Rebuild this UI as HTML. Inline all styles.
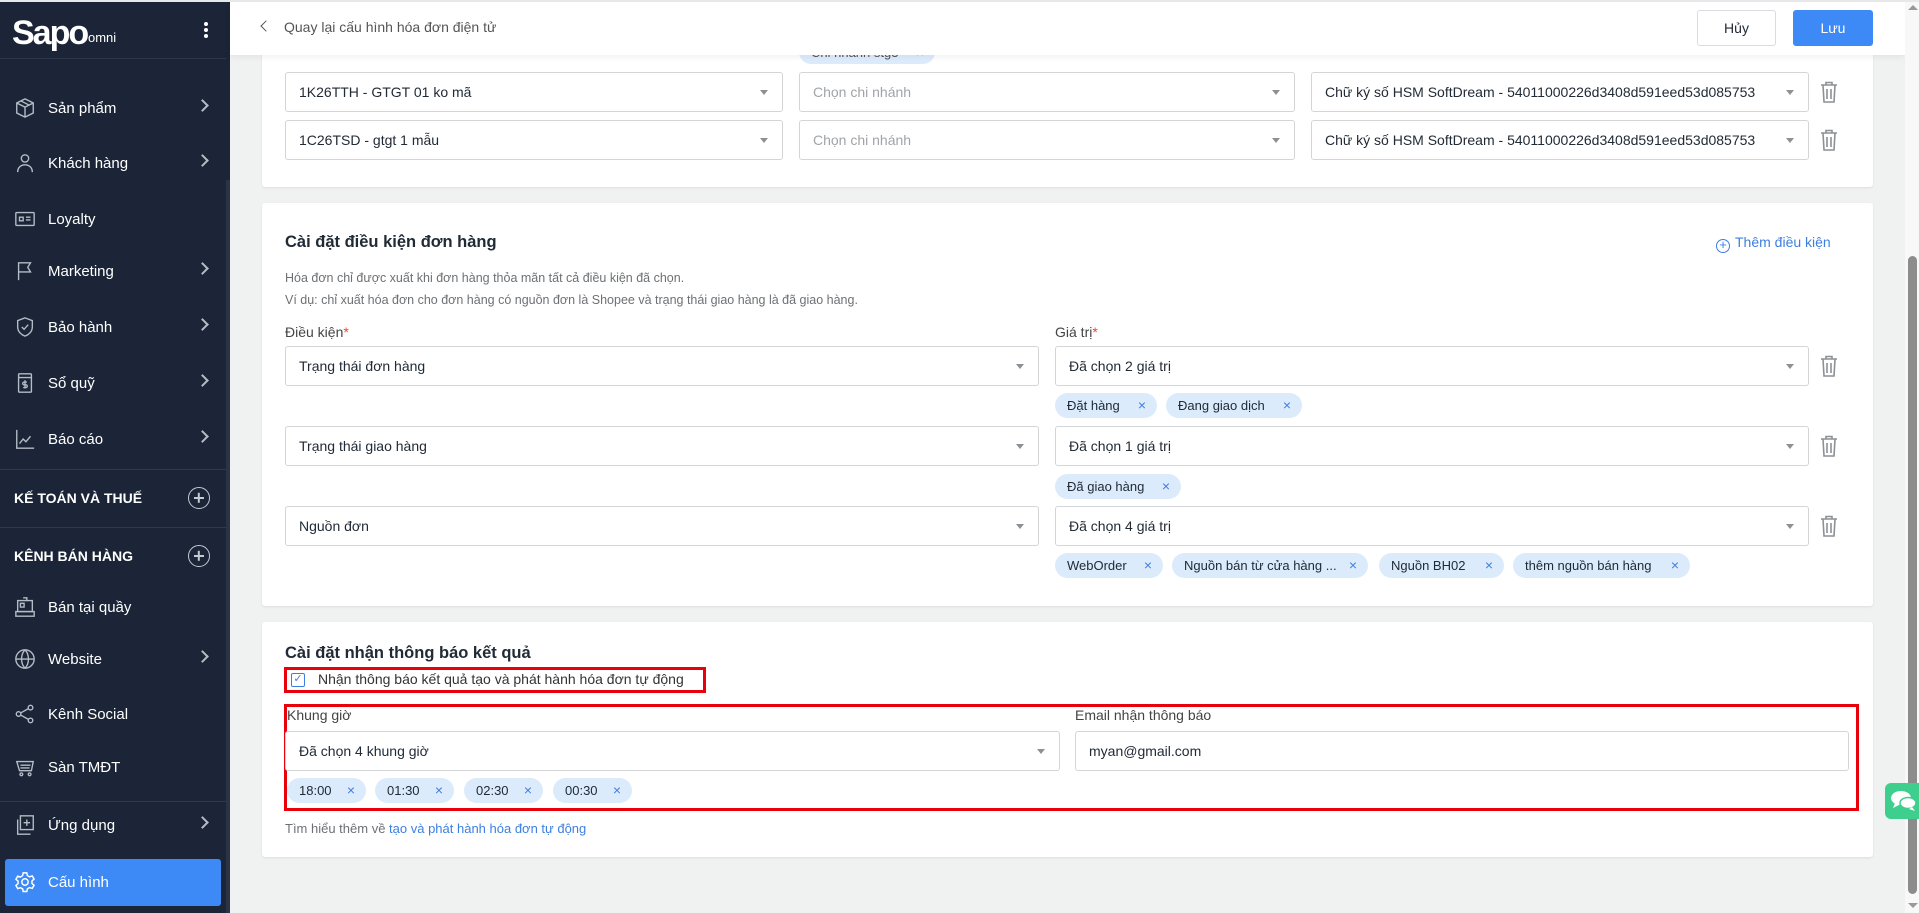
<!DOCTYPE html>
<html><head><meta charset="utf-8"><style>
*{box-sizing:border-box;margin:0;padding:0}
body{width:1919px;height:913px;overflow:hidden;background:#f0f1f1;font-family:"Liberation Sans",sans-serif;position:relative;color:#212b36}
.a{position:absolute}
#sb{left:0;top:0;width:230px;height:913px;background:#1b2537}
.nav{position:absolute;left:0;width:230px;height:40px;color:#fff;font-size:15px;display:flex;align-items:center}
.nav .ic{position:absolute;left:14px;width:22px;height:22px}
.nav span{position:absolute;left:48px}
.nav .ch{position:absolute;left:198px;top:13px;width:9px;height:9px;border-right:2px solid #b6bcc6;border-top:2px solid #b6bcc6;transform:rotate(45deg)}
.dv{position:absolute;left:0;width:226px;height:1px;background:#2f3a4c}
.sec{position:absolute;left:14px;color:#fff;font-weight:bold;font-size:14px}
.plus{position:absolute;left:188px;width:22px;height:22px;border:1.6px solid #c5cad2;border-radius:50%}
.plus:before,.plus:after{content:"";position:absolute;background:#c5cad2;left:4.5px;top:9px;width:10px;height:1.6px}
.plus:after{transform:rotate(90deg)}
.card{position:absolute;left:262px;width:1611px;background:#fff;border-radius:3px;box-shadow:0 1px 2px rgba(0,0,0,.08)}
.sel{position:absolute;height:40px;border:1px solid #d3d5d7;border-radius:3px;background:#fff;font-size:14px;line-height:38px;padding-left:13px;color:#212b36}
.sel.ar:after{content:"";position:absolute;right:14px;top:17px;border-left:4px solid transparent;border-right:4px solid transparent;border-top:5px solid #8c9196}
.ph{color:#a0a4a8}
.tr{position:absolute;width:18px;height:22px}
.chip{position:absolute;height:25px;background:#dcebfc;border-radius:13px;font-size:13px;line-height:25px;padding:0 28px 0 12px;color:#212b36;white-space:nowrap;overflow:hidden}
.chip:after{content:"×";position:absolute;right:11px;top:0;color:#3f7ee0;font-size:14px}
.t{position:absolute;white-space:nowrap}
</style></head><body>
<div class="a" style="left:0;top:0;width:1919px;height:2px;background:#e6e8ea;z-index:5"></div>
<div id="sb" class="a">
<div class="a" style="left:12px;top:14px;color:#fff;font-size:34px;font-weight:bold;letter-spacing:-2px;font-family:'Liberation Sans',sans-serif">Sapo</div>
<div class="a" style="left:88px;top:30px;color:#fff;font-size:13px">omni</div>
<div class="a" style="left:204px;top:22px;width:4px;height:4px;background:#fff;border-radius:2px;box-shadow:0 6px 0 #fff,0 12px 0 #fff"></div>
<div class="dv" style="top:58px;background:#2c3748"></div>
<div class="a" style="left:226px;top:180px;width:4px;height:733px;background:#2a3446"></div>
<div class="nav" style="top:88px"><svg class="ic" viewBox="0 0 24 24" fill="none" stroke="#b6bcc6" stroke-width="1.5"><path d="M12 2l9 4.5v11L12 22l-9-4.5v-11z M3 6.5l9 4.5 9-4.5 M12 11v11 M7.5 4.3l9 4.5"/></svg><span>Sản phẩm</span><i class="ch"></i></div>
<div class="nav" style="top:143px"><svg class="ic" viewBox="0 0 24 24" fill="none" stroke="#b6bcc6" stroke-width="1.5"><circle cx="12" cy="7" r="4"/><path d="M4 22c0-5 3.5-8 8-8s8 3 8 8"/></svg><span>Khách hàng</span><i class="ch"></i></div>
<div class="nav" style="top:199px"><svg class="ic" viewBox="0 0 24 24" fill="none" stroke="#b6bcc6" stroke-width="1.5"><rect x="2" y="5" width="20" height="14" rx="1"/><path d="M6 10h4v4H6z M13 10h5 M13 13h5"/></svg><span>Loyalty</span></div>
<div class="nav" style="top:251px"><svg class="ic" viewBox="0 0 24 24" fill="none" stroke="#b6bcc6" stroke-width="1.5"><path d="M5 22V3h13l-3 5 3 5H5"/></svg><span>Marketing</span><i class="ch"></i></div>
<div class="nav" style="top:307px"><svg class="ic" viewBox="0 0 24 24" fill="none" stroke="#b6bcc6" stroke-width="1.5"><path d="M12 2l8 3v7c0 5-4 8.5-8 10-4-1.5-8-5-8-10V5z M8.5 12l2.5 2.5 4.5-5"/></svg><span>Bảo hành</span><i class="ch"></i></div>
<div class="nav" style="top:363px"><svg class="ic" viewBox="0 0 24 24" fill="none" stroke="#b6bcc6" stroke-width="1.5"><rect x="5" y="2" width="14" height="20" rx="1"/><path d="M5 6h14 M12 9v9 M14 11h-3a1.5 1.5 0 000 3h2a1.5 1.5 0 010 3h-3"/></svg><span>Sổ quỹ</span><i class="ch"></i></div>
<div class="nav" style="top:419px"><svg class="ic" viewBox="0 0 24 24" fill="none" stroke="#b6bcc6" stroke-width="1.5"><path d="M3 2v20h19 M6 17l4-5 3 3 5-6"/></svg><span>Báo cáo</span><i class="ch"></i></div>
<div class="dv" style="top:469px"></div>
<div class="sec" style="top:490px">KẾ TOÁN VÀ THUẾ</div><div class="plus" style="top:487px"></div>
<div class="dv" style="top:527px"></div>
<div class="sec" style="top:548px">KÊNH BÁN HÀNG</div><div class="plus" style="top:545px"></div>
<div class="nav" style="top:587px"><svg class="ic" viewBox="0 0 24 24" fill="none" stroke="#b6bcc6" stroke-width="1.5"><rect x="4" y="5" width="16" height="12"/><path d="M2 17h20v5H2z M7 8h4v4H7z M10 2h4v3"/></svg><span>Bán tại quầy</span></div>
<div class="nav" style="top:639px"><svg class="ic" viewBox="0 0 24 24" fill="none" stroke="#b6bcc6" stroke-width="1.5"><circle cx="12" cy="12" r="10"/><path d="M2 12h20 M12 2c-5 5-5 15 0 20 M12 2c5 5 5 15 0 20"/></svg><span>Website</span><i class="ch"></i></div>
<div class="nav" style="top:694px"><svg class="ic" viewBox="0 0 24 24" fill="none" stroke="#b6bcc6" stroke-width="1.5"><circle cx="18" cy="5" r="2.5"/><circle cx="5" cy="12" r="2.5"/><circle cx="18" cy="19" r="2.5"/><path d="M7 11l9-5 M7 13l9 5"/></svg><span>Kênh Social</span></div>
<div class="nav" style="top:747px"><svg class="ic" viewBox="0 0 24 24" fill="none" stroke="#b6bcc6" stroke-width="1.5"><path d="M3 6h18l-2 10H6z M7 10h11 M7 13h10"/><circle cx="8" cy="20" r="1.5"/><circle cx="17" cy="20" r="1.5"/></svg><span>Sàn TMĐT</span></div>
<div class="dv" style="top:801px"></div>
<div class="nav" style="top:805px"><svg class="ic" viewBox="0 0 24 24" fill="none" stroke="#b6bcc6" stroke-width="1.5"><rect x="7" y="2" width="14" height="15"/><path d="M4 6v16h14 M14 6v7 M10.5 9.5h7"/></svg><span>Ứng dụng</span><i class="ch"></i></div>
<div class="a" style="left:5px;top:859px;width:216px;height:47px;background:#3d8af7;border-radius:3px"></div>
<div class="nav" style="top:862px"><svg class="ic" viewBox="0 0 24 24" fill="none" stroke="#fff" stroke-width="1.6"><circle cx="12" cy="12" r="3.5"/><path d="M10 2h4l.6 3 2.4 1.4 2.9-1 2 3.4-2.3 2v2.8l2.3 2-2 3.4-2.9-1-2.4 1.4-.6 3h-4l-.6-3L7 18.2l-2.9 1-2-3.4 2.3-2v-2.8l-2.3-2 2-3.4 2.9 1L9.4 5z"/></svg><span>Cấu hình</span></div>
</div>

<div class="card" style="top:40px;height:147px"></div>
<div class="chip" style="left:799px;top:40px;height:24px;color:#555;width:136px">Chi nhánh stg3</div>
<div class="sel ar" style="left:285px;top:72px;width:498px">1K26TTH - GTGT 01 ko mã</div>
<div class="sel ar" style="left:799px;top:72px;width:496px"><span class="ph">Chọn chi nhánh</span></div>
<div class="sel ar" style="left:1311px;top:72px;width:498px">Chữ ký số HSM SoftDream - 54011000226d3408d591eed53d085753</div>
<div class="sel ar" style="left:285px;top:120px;width:498px">1C26TSD - gtgt 1 mẫu</div>
<div class="sel ar" style="left:799px;top:120px;width:496px"><span class="ph">Chọn chi nhánh</span></div>
<div class="sel ar" style="left:1311px;top:120px;width:498px">Chữ ký số HSM SoftDream - 54011000226d3408d591eed53d085753</div>

<div class="a" style="left:230px;top:2px;width:1675px;height:53px;background:#fff;box-shadow:0 2px 6px rgba(0,0,0,.06)"></div>
<div class="a" style="left:262px;top:22px;width:8px;height:8px;border-left:1.6px solid #555;border-bottom:1.6px solid #555;transform:rotate(45deg)"></div>
<div class="t" style="left:284px;top:19px;font-size:14px;color:#555">Quay lại cấu hình hóa đơn điện tử</div>
<div class="a" style="left:1697px;top:10px;width:79px;height:36px;border:1px solid #d9dbde;border-radius:3px;text-align:center;line-height:34px;font-size:14px;background:#fff">Hủy</div>
<div class="a" style="left:1793px;top:10px;width:80px;height:36px;background:#3d8af7;border-radius:3px;text-align:center;line-height:36px;font-size:14px;color:#fff">Lưu</div>

<div class="card" style="top:203px;height:403px"></div>
<div class="t" style="left:285px;top:233px;font-size:16.5px;font-weight:bold;color:#212b36">Cài đặt điều kiện đơn hàng</div>
<div class="t" style="left:1716px;top:234px;font-size:14px;color:#3d7fe0"><span style="display:inline-block;width:14px;height:14px;border:1.5px solid #3d7fe0;border-radius:50%;text-align:center;line-height:10px;font-size:13px;vertical-align:-2px;margin-right:5px">+</span>Thêm điều kiện</div>
<div class="t" style="left:285px;top:271px;font-size:12.5px;color:#6d7175">Hóa đơn chỉ được xuất khi đơn hàng thỏa mãn tất cả điều kiện đã chọn.</div>
<div class="t" style="left:285px;top:293px;font-size:12.5px;color:#6d7175">Ví dụ: chỉ xuất hóa đơn cho đơn hàng có nguồn đơn là Shopee và trạng thái giao hàng là đã giao hàng.</div>
<div class="t" style="left:285px;top:324px;font-size:14px;color:#444">Điều kiện<span style="color:#e43">*</span></div>
<div class="t" style="left:1055px;top:324px;font-size:14px;color:#444">Giá trị<span style="color:#e43">*</span></div>
<div class="sel ar" style="left:285px;top:346px;width:754px">Trạng thái đơn hàng</div>
<div class="sel ar" style="left:1055px;top:346px;width:754px">Đã chọn 2 giá trị</div>
<div class="chip" style="left:1055px;top:393px;width:102px">Đặt hàng</div>
<div class="chip" style="left:1166px;top:393px;width:136px">Đang giao dịch</div>
<div class="sel ar" style="left:285px;top:426px;width:754px">Trạng thái giao hàng</div>
<div class="sel ar" style="left:1055px;top:426px;width:754px">Đã chọn 1 giá trị</div>
<div class="chip" style="left:1055px;top:474px;width:126px">Đã giao hàng</div>
<div class="sel ar" style="left:285px;top:506px;width:754px">Nguồn đơn</div>
<div class="sel ar" style="left:1055px;top:506px;width:754px">Đã chọn 4 giá trị</div>
<div class="chip" style="left:1055px;top:553px;width:108px">WebOrder</div>
<div class="chip" style="left:1172px;top:553px;width:196px">Nguồn bán từ cửa hàng ...</div>
<div class="chip" style="left:1379px;top:553px;width:125px">Nguồn BH02</div>
<div class="chip" style="left:1513px;top:553px;width:177px">thêm nguồn bán hàng</div>

<div class="card" style="top:622px;height:235px"></div>
<div class="t" style="left:285px;top:644px;font-size:16.5px;font-weight:bold;color:#212b36">Cài đặt nhận thông báo kết quả</div>
<div class="a" style="left:284px;top:667px;width:422px;height:26px;border:3px solid #e8000b"></div>
<div class="a" style="left:291px;top:673px;width:14px;height:14px;border:1.5px solid #3d7fe0;border-radius:2px;color:#3d7fe0;font-size:11px;line-height:11px;text-align:center">✓</div>
<div class="t" style="left:318px;top:671px;font-size:14px;color:#333">Nhận thông báo kết quả tạo và phát hành hóa đơn tự động</div>
<div class="a" style="left:284px;top:704px;width:1575px;height:107px;border:3px solid #e8000b"></div>
<div class="t" style="left:287px;top:707px;font-size:14px;color:#444">Khung giờ</div>
<div class="t" style="left:1075px;top:707px;font-size:14px;color:#444">Email nhận thông báo</div>
<div class="sel ar" style="left:285px;top:731px;width:775px">Đã chọn 4 khung giờ</div>
<div class="sel" style="left:1075px;top:731px;width:774px">myan@gmail.com</div>
<div class="chip" style="left:287px;top:778px;width:79px">18:00</div>
<div class="chip" style="left:375px;top:778px;width:79px">01:30</div>
<div class="chip" style="left:464px;top:778px;width:79px">02:30</div>
<div class="chip" style="left:553px;top:778px;width:79px">00:30</div>
<div class="t" style="left:285px;top:821px;font-size:13px;color:#6d7175">Tìm hiểu thêm về <span style="color:#3d7fe0">tạo và phát hành hóa đơn tự động</span></div>

<svg class="tr" style="left:1820px;top:81px" viewBox="0 0 18 22" fill="none" stroke="#8c9196" stroke-width="1.6"><path d="M1 4h16 M6 4V1.5h6V4 M3 4l1 17h10l1-17 M7 8v10 M11 8v10"/></svg>
<svg class="tr" style="left:1820px;top:129px" viewBox="0 0 18 22" fill="none" stroke="#8c9196" stroke-width="1.6"><path d="M1 4h16 M6 4V1.5h6V4 M3 4l1 17h10l1-17 M7 8v10 M11 8v10"/></svg>
<svg class="tr" style="left:1820px;top:355px" viewBox="0 0 18 22" fill="none" stroke="#8c9196" stroke-width="1.6"><path d="M1 4h16 M6 4V1.5h6V4 M3 4l1 17h10l1-17 M7 8v10 M11 8v10"/></svg>
<svg class="tr" style="left:1820px;top:435px" viewBox="0 0 18 22" fill="none" stroke="#8c9196" stroke-width="1.6"><path d="M1 4h16 M6 4V1.5h6V4 M3 4l1 17h10l1-17 M7 8v10 M11 8v10"/></svg>
<svg class="tr" style="left:1820px;top:515px" viewBox="0 0 18 22" fill="none" stroke="#8c9196" stroke-width="1.6"><path d="M1 4h16 M6 4V1.5h6V4 M3 4l1 17h10l1-17 M7 8v10 M11 8v10"/></svg>

<div class="a" style="left:1905px;top:2px;width:14px;height:911px;background:#f8f8f8"></div>
<div class="a" style="left:1908px;top:256px;width:9px;height:638px;background:#8c8c8c;border-radius:5px"></div>
<div class="a" style="left:1908px;top:5px;border-left:5px solid transparent;border-right:5px solid transparent;border-bottom:5px solid #999"></div>
<div class="a" style="left:1908px;top:903px;border-left:5px solid transparent;border-right:5px solid transparent;border-top:5px solid #999"></div>
<div class="a" style="left:1885px;top:783px;width:34px;height:36px;background:#3ecf8e;border-radius:6px 0 0 6px"></div>
<svg class="a" style="left:1890px;top:789px" width="28" height="24" viewBox="0 0 28 24" fill="#fff"><ellipse cx="11" cy="9" rx="10" ry="7"/><path d="M5 14l-2 5 6-3z"/><ellipse cx="18" cy="14" rx="8" ry="5.5" stroke="#3ecf8e" stroke-width="1.5"/><path d="M22 18l3 4-6-2z"/></svg>
</body></html>
